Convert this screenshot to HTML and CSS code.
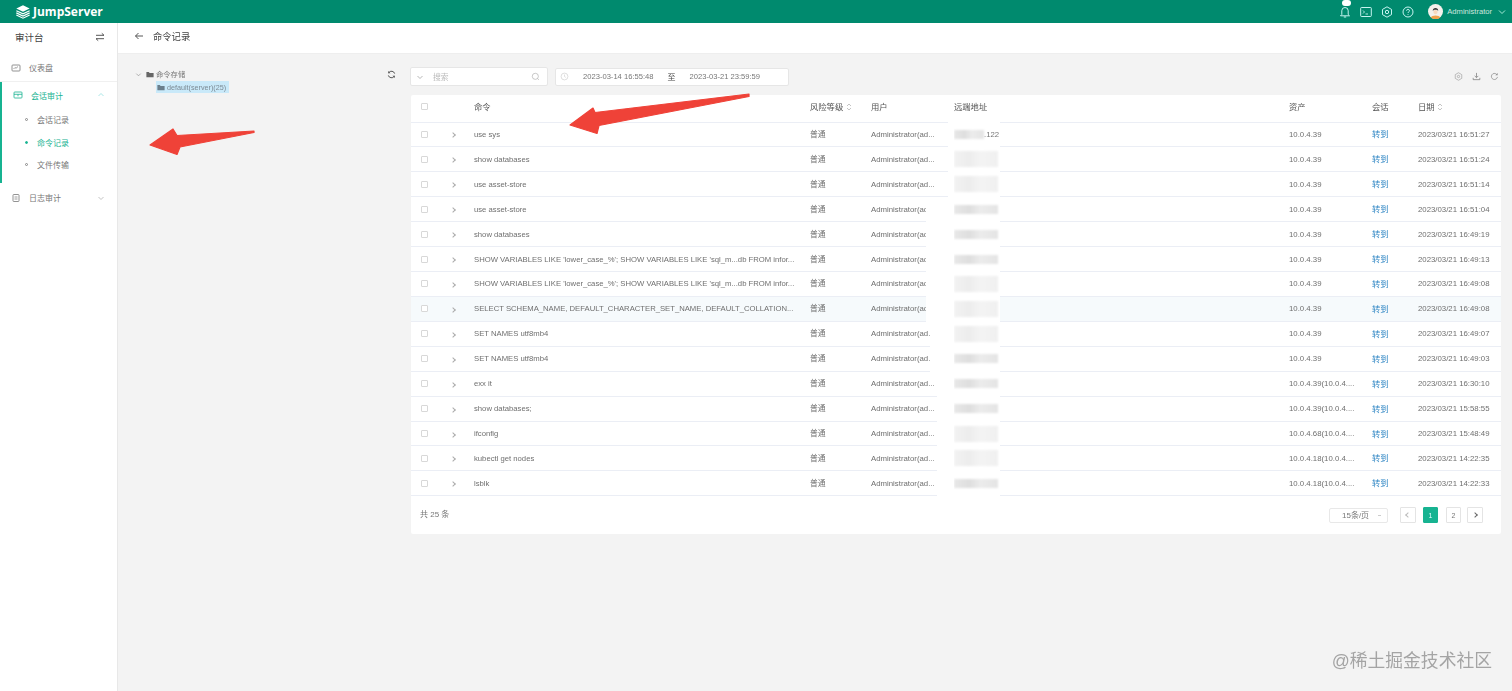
FILE: index.html
```html
<!DOCTYPE html>
<html>
<head>
<meta charset="utf-8">
<title>命令记录</title>
<link rel="stylesheet" href="styles.css">
</head>
<body>

<header class="topbar">
  <div class="logo">
    <svg class="logo-mark" viewBox="0 0 18 16"><path d="M9 .5l7.500 3.600L9 7.700 1.500 4.100z" fill="#fff"/><path d="M1.500 6.500L9 10.100l7.500-3.600M1.500 9L9 12.600 16.500 9M1.500 11.400L9 15l7.500-3.600" fill="none" stroke="#fff" stroke-width="1.300"/></svg>
    <span>JumpServer</span>
  </div>
  <div class="top-actions">
    <span class="bell">
      <svg class="top-icon" viewBox="0 0 12 12"><path d="M6 1.500a3.200 3.200 0 0 0-3.200 3.200v3.800L1.500 9.800h9L9.200 8.500V4.700A3.200 3.200 0 0 0 6 1.500zM4.800 11h2.400" fill="none" stroke="#dff" stroke-width=".9"/></svg>
      <i class="badge"></i>
    </span>
    <svg class="top-icon" viewBox="0 0 12 12"><rect x=".7" y="1.500" width="10.600" height="9" rx=".8" fill="none" stroke="#dff" stroke-width=".9"/><path d="M3 4.500l1.500 1.500L3 7.500M5.500 8h2.500" fill="none" stroke="#dff" stroke-width=".8"/></svg>
    <svg class="top-icon" viewBox="0 0 12 12"><path d="M6 .8l4.500 2.600v5.200L6 11.200 1.500 8.600V3.400z" fill="none" stroke="#dff" stroke-width=".9"/><circle cx="6" cy="6" r="1.700" fill="none" stroke="#dff" stroke-width=".9"/></svg>
    <svg class="top-icon" viewBox="0 0 12 12"><circle cx="6" cy="6" r="5" fill="none" stroke="#dff" stroke-width=".9"/><path d="M4.600 4.700a1.400 1.400 0 1 1 2 1.300c-.4.200-.6.500-.6 1M6 8.100v.8" fill="none" stroke="#dff" stroke-width=".9"/></svg>
    <span class="user">
      <svg class="avatar" viewBox="0 0 14 14"><circle cx="7" cy="7" r="7" fill="#f4f1ec"/><path d="M2.500 12.500C3.500 10 10.500 10 11.500 12.500A7 7 0 0 1 2.500 12.500z" fill="#efa24c"/><path d="M4.500 6.500C4 2.800 10 2.800 9.500 6.500 8.800 5 5.200 5 4.500 6.500z" fill="#333"/><circle cx="7" cy="7.500" r="2" fill="#f7d9c0"/></svg>
      <span>Administrator</span>
      <svg class="caret" viewBox="0 0 8 8"><path d="M1 2.500l3 3 3-3" fill="none" stroke="#cfe" stroke-width=".8"/></svg>
    </span>
  </div>
</header>

<div class="layout">
  <aside class="sidebar">
    <div class="side-title">
      <span>审计台</span>
      <svg class="swap" viewBox="0 0 10 10"><path d="M1 3.300h8L6.800 1.300M9 6.700H1l2.200 2" fill="none" stroke="#444" stroke-width=".9"/></svg>
    </div>
    <div class="side-item side-dash">
      <svg class="side-icon" viewBox="0 0 10 10"><rect x="1" y="2" width="8" height="6" rx=".8" fill="none" stroke="#777" stroke-width=".8"/><path d="M2.500 6l1.500-1.500 1 .8L7 3.500" fill="none" stroke="#777" stroke-width=".7"/></svg>
      <span>仪表盘</span>
    </div>
    <div class="side-group">
      <div class="side-item side-active">
        <svg class="side-icon" viewBox="0 0 10 10"><rect x="1" y="2" width="8" height="6" rx=".8" fill="none" stroke="#17b391" stroke-width=".8"/><path d="M1 4.300h8M5 4.300v2" fill="none" stroke="#17b391" stroke-width=".8"/></svg>
        <span>会话审计</span>
        <svg class="side-caret" viewBox="0 0 8 8"><path d="M1.500 5l2.500-2.500L6.500 5" fill="none" stroke="#8dd" stroke-width=".7"/></svg>
      </div>
      <div class="sub-item"><i class="dot"></i>会话记录</div>
      <div class="sub-item sub-active"><i class="dot"></i>命令记录</div>
      <div class="sub-item"><i class="dot"></i>文件传输</div>
    </div>
    <div class="side-item side-log">
      <svg class="side-icon" viewBox="0 0 10 10"><rect x="2" y="1.500" width="6" height="7" rx=".8" fill="none" stroke="#777" stroke-width=".8"/><path d="M3.500 4h3M3.500 6h3" stroke="#777" stroke-width=".7"/></svg>
      <span>日志审计</span>
      <svg class="side-caret" viewBox="0 0 8 8"><path d="M1.500 3l2.500 2.500L6.500 3" fill="none" stroke="#aaa" stroke-width=".7"/></svg>
    </div>
  </aside>

  <main class="main">
    <div class="page-head">
      <svg class="back" viewBox="0 0 10 10"><path d="M9 5H1.500M4.500 2L1.500 5l3 3" fill="none" stroke="#444" stroke-width=".9"/></svg>
      <span>命令记录</span>
    </div>

    <div class="content">
      <div class="tree">
        <div class="tree-root">
          <svg class="tree-caret" viewBox="0 0 8 8"><path d="M1.500 3l2.500 2.500L6.500 3" fill="none" stroke="#888" stroke-width=".7"/></svg>
          <svg class="folder" viewBox="0 0 10 8"><path d="M.5 1h3l1 1h5v5.500h-9z" fill="#666"/></svg>
          <span>命令存储</span>
        </div>
        <div class="tree-node">
          <svg class="folder" viewBox="0 0 10 8"><path d="M.5 1h3l1 1h5v5.500h-9z" fill="#6b7f8c"/></svg>
          <span>default(server)(25)</span>
        </div>
        <svg class="tree-refresh" viewBox="0 0 10 10"><path d="M8.500 4A3.600 3.600 0 0 0 2 3M1.500 6A3.600 3.600 0 0 0 8 7" fill="none" stroke="#555" stroke-width="1.100"/><path d="M1.300 1v2.600h2.600zM8.700 9V6.400H6.100z" fill="#555"/></svg>
      </div>

      <div class="right">
        <div class="toolbar">
          <div class="search">
            <svg class="caret-sm" viewBox="0 0 8 8"><path d="M1.500 3l2.500 2.500L6.500 3" fill="none" stroke="#999" stroke-width=".7"/></svg>
            <span class="placeholder">搜索</span>
            <svg class="search-icon" viewBox="0 0 10 10"><circle cx="4.800" cy="4.800" r="3.400" fill="none" stroke="#aaa" stroke-width=".7"/><path d="M7.300 7.300l1.500 1.500" stroke="#aaa" stroke-width=".7"/></svg>
          </div>
          <div class="dates">
            <svg class="clock" viewBox="0 0 10 10"><circle cx="5" cy="5" r="3.800" fill="none" stroke="#ccc" stroke-width=".7"/><path d="M5 2.800V5l1.400 1" fill="none" stroke="#ccc" stroke-width=".7"/></svg>
            <span class="date-val">2023-03-14 16:55:48</span>
            <span class="date-sep">至</span>
            <span class="date-val">2023-03-21 23:59:59</span>
          </div>
          <div class="tools">
            <svg class="tool" viewBox="0 0 10 10"><path d="M5 .8l3.600 2.100v4.200L5 9.200 1.400 7.100V2.900z" fill="none" stroke="#999" stroke-width=".7"/><circle cx="5" cy="5" r="1.300" fill="none" stroke="#999" stroke-width=".7"/></svg>
            <svg class="tool" viewBox="0 0 10 10"><path d="M5 1v5M3 4.300L5 6.300l2-2M1.300 6.500v2h7.400v-2" fill="none" stroke="#777" stroke-width=".8"/></svg>
            <svg class="tool" viewBox="0 0 10 10"><path d="M8.300 5.500A3.400 3.400 0 1 1 7.300 2.500" fill="none" stroke="#888" stroke-width=".8"/><path d="M8.500 1v2.600H5.900z" fill="#888"/></svg>
          </div>
        </div>

        <div class="panel">
          <table class="grid">
            <colgroup>
              <col class="c-check"><col class="c-expand"><col class="c-cmd"><col class="c-risk"><col class="c-user"><col class="c-remote"><col class="c-asset"><col class="c-sess"><col class="c-date">
            </colgroup>
            <thead>
              <tr>
                <th><i class="box"></i></th><th></th><th>命令</th>
                <th>风险等级 <svg class="sort" viewBox="0 0 6 8"><path d="M1 3l2-2 2 2M1 5l2 2 2-2" fill="none" stroke="#aaa" stroke-width=".7"/></svg></th><th>用户</th><th>远端地址</th><th>资产</th><th>会话</th>
                <th>日期 <svg class="sort" viewBox="0 0 6 8"><path d="M1 3l2-2 2 2M1 5l2 2 2-2" fill="none" stroke="#aaa" stroke-width=".7"/></svg></th>
              </tr>
            </thead>
            <tbody>
              <tr><td><i class="box"></i></td><td><i class="chev"></i></td><td>use sys</td><td>普通</td><td>Administrator(ad...</td><td><i class="ip ip-short"></i><span class="ip-end">.122</span></td><td>10.0.4.39</td><td><a class="link">转到</a></td><td>2023/03/21 16:51:27</td></tr>
              <tr><td><i class="box"></i></td><td><i class="chev"></i></td><td>show databases</td><td>普通</td><td>Administrator(ad...</td><td><i class="ip ip-pale"></i></td><td>10.0.4.39</td><td><a class="link">转到</a></td><td>2023/03/21 16:51:24</td></tr>
              <tr><td><i class="box"></i></td><td><i class="chev"></i></td><td>use asset-store</td><td>普通</td><td>Administrator(ad...</td><td><i class="ip ip-pale"></i></td><td>10.0.4.39</td><td><a class="link">转到</a></td><td>2023/03/21 16:51:14</td></tr>
              <tr><td><i class="box"></i></td><td><i class="chev"></i></td><td>use asset-store</td><td>普通</td><td>Administrator(ad...</td><td><i class="ip"></i></td><td>10.0.4.39</td><td><a class="link">转到</a></td><td>2023/03/21 16:51:04</td></tr>
              <tr><td><i class="box"></i></td><td><i class="chev"></i></td><td>show databases</td><td>普通</td><td>Administrator(ad...</td><td><i class="ip"></i></td><td>10.0.4.39</td><td><a class="link">转到</a></td><td>2023/03/21 16:49:19</td></tr>
              <tr><td><i class="box"></i></td><td><i class="chev"></i></td><td>SHOW VARIABLES LIKE 'lower_case_%'; SHOW VARIABLES LIKE 'sql_m...db FROM infor...</td><td>普通</td><td>Administrator(ad...</td><td><i class="ip"></i></td><td>10.0.4.39</td><td><a class="link">转到</a></td><td>2023/03/21 16:49:13</td></tr>
              <tr><td><i class="box"></i></td><td><i class="chev"></i></td><td>SHOW VARIABLES LIKE 'lower_case_%'; SHOW VARIABLES LIKE 'sql_m...db FROM infor...</td><td>普通</td><td>Administrator(ad...</td><td><i class="ip ip-pale"></i></td><td>10.0.4.39</td><td><a class="link">转到</a></td><td>2023/03/21 16:49:08</td></tr>
              <tr class="hover"><td><i class="box"></i></td><td><i class="chev"></i></td><td>SELECT SCHEMA_NAME, DEFAULT_CHARACTER_SET_NAME, DEFAULT_COLLATION...</td><td>普通</td><td>Administrator(ad...</td><td><i class="ip ip-pale"></i></td><td>10.0.4.39</td><td><a class="link">转到</a></td><td>2023/03/21 16:49:08</td></tr>
              <tr><td><i class="box"></i></td><td><i class="chev"></i></td><td>SET NAMES utf8mb4</td><td>普通</td><td>Administrator(ad...</td><td><i class="ip ip-pale"></i></td><td>10.0.4.39</td><td><a class="link">转到</a></td><td>2023/03/21 16:49:07</td></tr>
              <tr><td><i class="box"></i></td><td><i class="chev"></i></td><td>SET NAMES utf8mb4</td><td>普通</td><td>Administrator(ad...</td><td><i class="ip"></i></td><td>10.0.4.39</td><td><a class="link">转到</a></td><td>2023/03/21 16:49:03</td></tr>
              <tr><td><i class="box"></i></td><td><i class="chev"></i></td><td>exx it</td><td>普通</td><td>Administrator(ad...</td><td><i class="ip"></i></td><td>10.0.4.39(10.0.4....</td><td><a class="link">转到</a></td><td>2023/03/21 16:30:10</td></tr>
              <tr><td><i class="box"></i></td><td><i class="chev"></i></td><td>show databases;</td><td>普通</td><td>Administrator(ad...</td><td><i class="ip"></i></td><td>10.0.4.39(10.0.4....</td><td><a class="link">转到</a></td><td>2023/03/21 15:58:55</td></tr>
              <tr><td><i class="box"></i></td><td><i class="chev"></i></td><td>ifconfig</td><td>普通</td><td>Administrator(ad...</td><td><i class="ip ip-pale"></i></td><td>10.0.4.68(10.0.4....</td><td><a class="link">转到</a></td><td>2023/03/21 15:48:49</td></tr>
              <tr><td><i class="box"></i></td><td><i class="chev"></i></td><td>kubectl get nodes</td><td>普通</td><td>Administrator(ad...</td><td><i class="ip ip-pale"></i></td><td>10.0.4.18(10.0.4....</td><td><a class="link">转到</a></td><td>2023/03/21 14:22:35</td></tr>
              <tr><td><i class="box"></i></td><td><i class="chev"></i></td><td>lsblk</td><td>普通</td><td>Administrator(ad...</td><td><i class="ip"></i></td><td>10.0.4.18(10.0.4....</td><td><a class="link">转到</a></td><td>2023/03/21 14:22:33</td></tr>
            </tbody>
          </table>

          <div class="panel-foot">
            <span class="total">共 25 条</span>
            <div class="pager">
              <span class="page-size">15条/页<i class="size-caret"></i></span>
              <span class="page-btn page-prev"><i class="pg-left"></i></span>
              <span class="page-num page-on">1</span>
              <span class="page-num page-two">2</span>
              <span class="page-btn"><i class="pg-right"></i></span>
            </div>
          </div>

          <div class="smear smear-a"></div>
          <div class="smear smear-b"></div>
          <div class="smear smear-d"></div>
          <div class="smear smear-c"></div>
        </div>
      </div>
    </div>
  </main>
</div>

<svg class="arrows" viewBox="0 0 1512 691">
  <path d="M254 131L177 135.500 173 129 150 145 177 154.500 180 147 254 132.500z" fill="#ef4238" stroke="#ef4238" stroke-width="1.200" stroke-linejoin="round"/>
  <path d="M749 94L595 112.500 593 108 570 125 597 133.500 599 125.500 749 96.500z" fill="#ef4238" stroke="#ef4238" stroke-width="1.200" stroke-linejoin="round"/>
</svg>
<div class="watermark">@稀土掘金技术社区</div>

</body>
</html>
```

FILE: styles.css
```css
* {box-sizing: border-box;}

html, body {
  margin: 0;
  height: 691px;
  overflow: hidden;
}

body {
  position: relative;
  font-family: "Liberation Sans", "Noto Sans CJK SC", sans-serif;
  font-size: 8px;
  color: #666;
  background: #f3f3f3;
  filter: blur(.4px);
}

/* top bar */
.topbar {
  display: flex;
  justify-content: space-between;
  align-items: center;
  height: 23px;
  padding: 0 6px 0 15px;
  background: #008a6e;
  color: #fff;
}

.logo {
  display: flex;
  align-items: center;
  gap: 2px;
  font-family: "Open Sans", sans-serif;
  font-size: 12px;
  font-weight: 700;
}

.logo-mark {
  width: 16px;
  height: 16px;
}

.top-actions {
  display: flex;
  align-items: center;
  gap: 9px;
}

.top-icon {
  display: block;
  width: 12px;
  height: 12px;
}

.bell {
  position: relative;
}

.badge {
  position: absolute;
  top: -6px;
  left: 3px;
  width: 9px;
  height: 6px;
  border-radius: 3px;
  background: #fff;
}

.user {
  display: flex;
  align-items: center;
  margin-left: 5px;
  color: #cfe6df;
  font-size: 7.600px;
}

.avatar {
  width: 15px;
  height: 15px;
  margin-right: 4px;
}

.caret {
  width: 8px;
  height: 8px;
  margin-left: 6px;
}

/* sidebar */
.layout {
  display: flex;
  height: 668px;
}

.sidebar {
  flex: none;
  width: 118px;
  background: #fff;
  border-right: 1px solid #e8e8e8;
}

.side-title {
  display: flex;
  justify-content: space-between;
  align-items: center;
  height: 30px;
  padding: 0 12px 2px 15px;
  font-size: 9.500px;
  color: #444;
}

.swap {
  width: 10px;
  height: 10px;
}

.side-item {
  display: flex;
  align-items: center;
  padding-left: 11px;
  font-size: 8px;
  color: #777;
}

.side-icon {
  width: 10px;
  height: 10px;
  margin-right: 8px;
}

.side-dash {
  height: 29px;
  padding-top: 1px;
  border-bottom: 1px solid #f0f0f0;
}

.side-group {
  height: 101px;
  border-left: 2px solid #17b391;
}

.side-active {
  height: 26.500px;
  padding-left: 11px;
  color: #17b391;
}

.side-caret {
  width: 8px;
  height: 8px;
  margin-left: auto;
  margin-right: 12px;
}

.sub-item {
  display: flex;
  align-items: center;
  height: 22.500px;
  padding-left: 23px;
  color: #777;
  font-size: 8px;
}

.dot {
  width: 3px;
  height: 3px;
  margin-right: 9px;
  border-radius: 50%;
  border: 1px solid #888;
}

.sub-active {
  color: #17b391;
}

.sub-active .dot {
  background: #17b391;
  border-color: #17b391;
}

.side-log {
  height: 30px;
  padding-bottom: 1px;
}

/* main column */
.main {
  display: flex;
  flex-direction: column;
  flex: 1;
  min-width: 0;
}

.page-head {
  display: flex;
  align-items: center;
  height: 31px;
  padding: 0 0 4px 16px;
  background: #fff;
  font-size: 9.300px;
  color: #444;
  border-bottom: 1px solid #eee;
}

.back {
  width: 10px;
  height: 10px;
  margin-right: 9px;
}

.content {
  display: flex;
  flex: 1;
  padding: 13px 11px 0 17px;
}

.tree {
  position: relative;
  flex: none;
  width: 276px;
  color: #777;
}

.tree-root {
  display: flex;
  align-items: center;
  height: 14px;
}

.tree-caret {
  width: 7px;
  height: 7px;
  margin-right: 4px;
}

.folder {
  width: 8px;
  height: 7px;
  margin-right: 2px;
}

.tree-root span {
  font-size: 7.300px;
}

.tree-node {
  display: inline-flex;
  align-items: center;
  height: 12px;
  margin-left: 21px;
  padding: 0 3px 0 1px;
  background: #c9e9f9;
  color: #7c8a94;
  font-size: 7.200px;
}

.tree-refresh {
  position: absolute;
  top: 3px;
  right: 15px;
  width: 9px;
  height: 9px;
}

.right {
  flex: 1;
  min-width: 0;
}

/* filter row */
.toolbar {
  display: flex;
  align-items: center;
  height: 19px;
  margin-bottom: 9px;
}

.search {
  display: flex;
  align-items: center;
  width: 138px;
  height: 19px;
  margin-left: -1px;
  padding: 0 7px 0 5px;
  background: #fff;
  border: 1px solid #e6e6e6;
  border-radius: 2px;
}

.caret-sm {
  width: 8px;
  height: 8px;
}

.placeholder {
  margin-left: 9px;
  color: #bbb;
  font-size: 7.800px;
}

.search-icon {
  width: 9px;
  height: 9px;
  margin-left: auto;
}

.dates {
  display: flex;
  align-items: center;
  width: 234px;
  height: 18px;
  margin-left: 7px;
  padding-left: 4px;
  background: #fff;
  border: 1px solid #e6e6e6;
  border-radius: 2px;
  color: #777;
  font-size: 7.600px;
}

.clock {
  width: 9px;
  height: 9px;
  margin-right: 14px;
}

.date-sep {
  margin: 0 14px 0 14px;
  font-size: 8px;
  color: #444;
}

.tools {
  display: flex;
  gap: 9px;
  margin-left: auto;
  padding-right: 2px;
}

.tool {
  width: 9px;
  height: 9px;
}

/* table */
.panel {
  position: relative;
  background: #fff;
  border-radius: 2px;
}

.grid {
  width: 100%;
  border-collapse: collapse;
  table-layout: fixed;
  font-size: 7.800px;
}

.c-check {width: 34px;}
.c-expand {width: 29px;}
.c-cmd {width: 336px;}
.c-risk {width: 61px;}
.c-user {width: 83px;}
.c-remote {width: 335px;}
.c-asset {width: 83px;}
.c-sess {width: 46px;}
.c-date {width: 83px;}

.grid th {
  height: 27px;
  padding: 0 0 4px;
  text-align: left;
  font-weight: 400;
  font-size: 8.300px;
  color: #555;
  border-bottom: 1px solid #ebeef5;
  overflow: hidden;
  white-space: nowrap;
}

.grid td {
  height: 24.930px;
  padding: 0;
  color: #6f6f6f;
  border-bottom: 1px solid #ebeef5;
  white-space: nowrap;
  overflow: hidden;
}

.grid td:nth-child(3) {
  font-size: 7.700px;
}

/* CJK cells sit a little low next to latin ones */
.grid td:nth-child(4), .grid td:nth-child(8) {
  padding-bottom: 2px;
}

.hover td {
  background: #f6fafc;
}

.box {
  display: block;
  width: 7px;
  height: 7px;
  margin-left: 10px;
  border: 1px solid #d8d8d8;
  border-radius: 1px;
  background: #fff;
}

.grid td .box {
  margin-top: 0;
}

.chev {
  display: block;
  width: 4px;
  height: 4px;
  margin: 2px 0 0 6px;
  border-top: 1px solid #aaa;
  border-right: 1px solid #aaa;
  transform: rotate(45deg);
}

.sort {
  width: 6px;
  height: 8px;
  vertical-align: -1px;
}

.link {
  color: #2f86c4;
  font-size: 8.300px;
}

/* blurred address cells */
.ip {
  position: relative;
  z-index: 2;
  display: inline-block;
  width: 44px;
  height: 9px;
  vertical-align: middle;
  background: linear-gradient(90deg, #e8e8e8, #dedede 35%, #ececec 60%, #e4e4e4);
  filter: blur(.8px);
}

.ip-short {
  width: 30px;
}

.ip-end {
  position: relative;
  z-index: 2;
  color: #777;
}

.ip-pale {
  height: 16px;
  opacity: .55;
}

.smear {
  position: absolute;
  z-index: 1;
  left: 537px;
  width: 52px;
  background: #fff;
}

.smear-a {
  top: 26px;
  height: 77px;
}

.smear-b {
  top: 103px;
  left: 515px;
  width: 74px;
  height: 124px;
}

.smear-d {
  top: 227px;
  left: 519px;
  width: 70px;
  height: 50px;
}

.smear-c {
  top: 277px;
  left: 526px;
  width: 63px;
  height: 125px;
}

/* pagination */
.panel-foot {
  display: flex;
  align-items: center;
  justify-content: space-between;
  height: 38px;
  padding: 0 18px 0 9px;
  color: #777;
}

.total {
  margin-bottom: 3px;
}

.pager {
  display: flex;
  align-items: center;
}

.page-size {
  position: relative;
  width: 59px;
  height: 15px;
  margin-right: 12px;
  padding-left: 12px;
  line-height: 14px;
  border: 1px solid #e8e8e8;
  border-radius: 2px;
  color: #777;
}

.size-caret {
  position: absolute;
  top: 6px;
  right: 6px;
  width: 3px;
  height: 1px;
  background: #ccc;
}

.page-btn, .page-num {
  display: flex;
  align-items: center;
  justify-content: center;
  width: 16px;
  height: 16px;
  border: 1px solid #e4e4e4;
  border-radius: 1px;
  font-size: 7px;
}

.page-prev {
  margin-right: 7px;
}

.page-num {
  width: 15px;
  margin-right: 8px;
}

.page-two {
  margin-right: 6px;
}

.page-on {
  background: #17b391;
  border-color: #17b391;
  color: #dff;
}

.pg-left, .pg-right {
  width: 4px;
  height: 4px;
  border-top: 1px solid #666;
  border-right: 1px solid #666;
  transform: rotate(45deg);
}

.pg-left {
  border-color: #bbb;
  transform: rotate(-135deg);
}

/* overlays */
.arrows {
  position: absolute;
  top: 0;
  left: 0;
  width: 1512px;
  height: 691px;
  pointer-events: none;
}

.watermark {
  position: absolute;
  top: 646px;
  right: 20px;
  font-size: 17.800px;
  color: #a4a4a4;
}
```
